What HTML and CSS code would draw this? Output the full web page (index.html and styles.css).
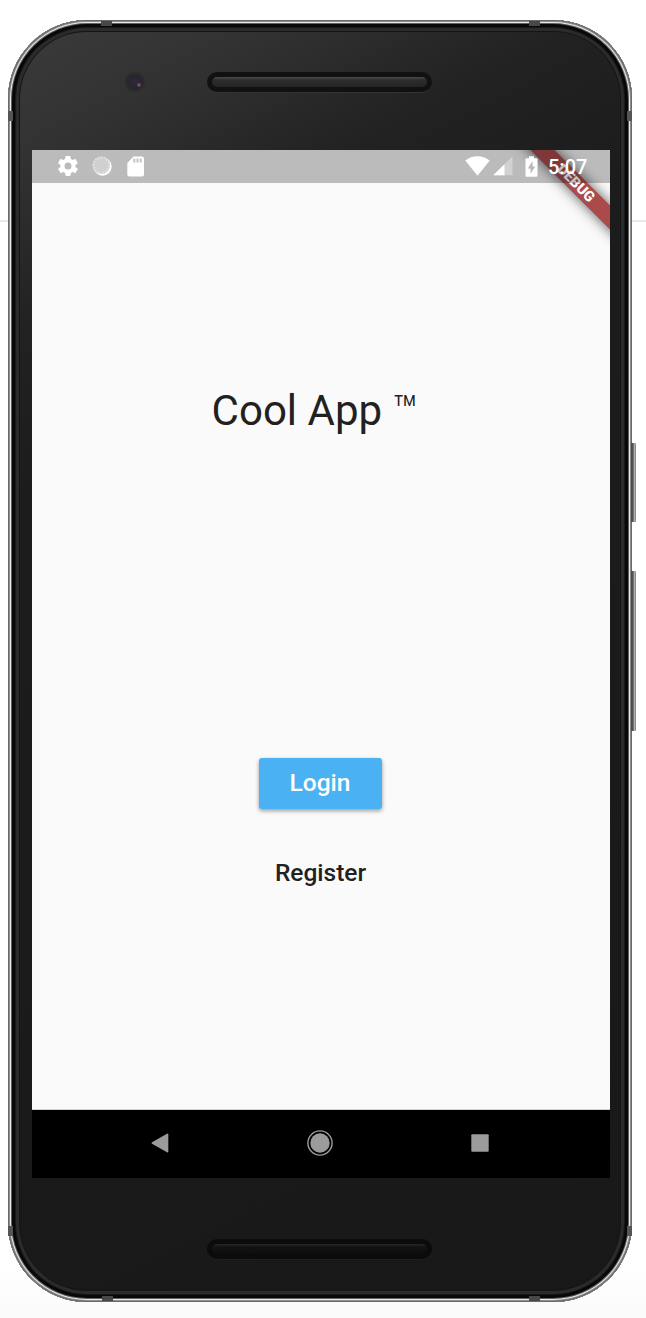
FILE: index.html
```html
<!DOCTYPE html>
<html lang="en">
<head>
<meta charset="utf-8">
<title>Cool App</title>
<link rel="stylesheet" href="styles.css">
</head>
<body>
<main class="page">
  <div class="device">
    <i class="side-key power"></i>
    <i class="side-key volume"></i>
    <i class="seam seam-tl"></i><i class="seam seam-tr"></i><i class="seam seam-bl"></i><i class="seam seam-br"></i>
    <i class="seam seam-lt"></i><i class="seam seam-rt"></i><i class="seam seam-lb"></i><i class="seam seam-rb"></i>
    <header class="forehead">
      <i class="camera"></i>
      <i class="speaker"></i>
    </header>
    <section class="screen">
      <div class="banner-clip"><div class="banner">DEBUG</div></div>
      <div class="status">
        <svg class="gear" width="24" height="24" viewBox="0 0 24 24"><path d="M19.4 13c0-.3.1-.6.1-1s0-.7-.1-1l2.1-1.6c.2-.2.2-.4.1-.6l-2-3.5c-.1-.2-.4-.3-.6-.2l-2.5 1c-.5-.4-1.1-.7-1.7-1l-.4-2.6c0-.3-.2-.5-.5-.5h-4c-.3 0-.5.2-.5.4L9 5.1c-.6.3-1.200.6-1.700 1l-2.500-1c-.2-.1-.5 0-.6.2l-2 3.500c-.1.2-.1.4.1.6L4.500 11c0 .3-.1.6-.1 1s0 .7.1 1l-2.100 1.600c-.2.2-.2.4-.1.6l2 3.500c.1.2.4.3.6.2l2.500-1c.5.4 1.100.7 1.700 1l.4 2.600c0 .2.2.5.5.5h4c.3 0 .5-.2.5-.5l.4-2.600c.6-.3 1.200-.6 1.700-1l2.500 1c.2.1.5 0 .6-.2l2-3.500c.1-.2.1-.5-.1-.6zM12 15.500a3.500 3.500 0 1 1 0-7 3.500 3.500 0 0 1 0 7z"/></svg>
        <svg class="sync" width="22" height="22" viewBox="0 0 22 22"><circle cx="11.500" cy="11.500" r="9.200"/><circle class="sync-face" cx="10.300" cy="10.300" r="8.800"/><circle class="sync-ticks" cx="10.300" cy="10.300" r="7.800"/></svg>
        <svg class="sd" width="17" height="21" viewBox="0 0 17 21"><path d="M6.500.5H15a2 2 0 0 1 2 2v16a2 2 0 0 1-2 2H2.300a2 2 0 0 1-2-2V7z"/><path class="pins" d="M6.300 2.500h2v4h-2zM9.500 2.500h2v4h-2zM12.700 2.500h2v4h-2z"/></svg>
        <span class="spacer"></span>
        <svg class="wifi" width="25" height="20" viewBox="0 0 25 20"><path d="M.3 4.500C3.800 1.600 8 .2 12.500.2s8.700 1.400 12.200 4.300L12.500 19.700z"/></svg>
        <svg class="cell" width="20" height="20" viewBox="0 0 20 20"><path class="faint" d="M19.500.3v19H.3z"/><path d="M11.500 8.200v11.100H.3z"/></svg>
        <svg class="battery" width="13" height="21" viewBox="0 0 13 21"><path fill-rule="evenodd" d="M4 .3h5v2h2.500q1 0 1 1v16.400q0 1-1 1h-10q-1 0-1-1V3.300q0-1 1-1H4zM7.500 5.200 2.800 12.500h2.700v5.300l4.700-7.300H7.500z"/></svg>
        <span class="clock">5:07</span>
      </div>
      <div class="app">
        <h1 class="title">Cool App <span class="mark">™</span></h1>
        <button class="login">Login</button>
        <a class="register">Register</a>
      </div>
      <nav class="nav">
        <svg width="18" height="20" viewBox="0 0 18 20"><path d="M16 .8Q17.300.1 17.300 1.600v16.800q0 1.500-1.300.8L1 10.800q-1-.8 0-1.600z"/></svg>
        <svg width="26" height="26" viewBox="0 0 26 26"><circle cx="13" cy="13" r="9.700"/><circle class="ring" cx="13" cy="13" r="12.100"/></svg>
        <svg width="18" height="18" viewBox="0 0 18 18"><rect x=".3" y=".3" width="17.400" height="17.400" rx="1"/></svg>
      </nav>
    </section>
    <footer class="chin"><i class="speaker dark"></i></footer>
  </div>
</main>
</body>
</html>
```
FILE: styles.css
```css
* { box-sizing: border-box; }
body { margin: 0; font-family: Roboto, sans-serif; }
.page {
  height: 1318px;
  padding: 20px 14px 0 8px;
  overflow: hidden;
  background:
    linear-gradient(#e9e9e9, #e9e9e9) 0 220px / 100% 2px no-repeat,
    linear-gradient(#fff 1265px, #fafafa 1318px);
}
.device {
  position: relative;
  width: 624px;
  height: 1282px;
  padding: 12px 22px 0 24px;
  border-radius: 79px;
  background: linear-gradient(152deg, #3b3b3b 0, #323232 9%, #222 19%, #1c1c1c 30%, #181818 100%);
  box-shadow:
    inset 0 0 0 1px #6a6a6a,
    inset 0 0 0 2px #8d8d8d,
    inset 0 0 0 3px #e8e8e8,
    inset 0 0 0 4px #606060,
    inset 0 0 0 7px #080808,
    inset 0 0 0 8px #191919,
    inset 0 0 0 11px #2b2b2b,
    inset 0 0 0 12px #151515;
}
.side-key {
  position: absolute;
  left: 623px;
  width: 5px;
  border-radius: 0 1px 1px 0;
  background: linear-gradient(90deg, #444, #5b5b5b 45%, #bbb 65%, #777);
}
.power { top: 423px; height: 79px; }
.volume { top: 551px; height: 160px; }
.seam { position: absolute; width: 11px; height: 5px; background: #484848; }
.seam-tl { left: 93px; top: 1px; }
.seam-tr { left: 521px; top: 1px; }
.seam-bl { left: 94px; bottom: 1px; }
.seam-br { left: 521px; bottom: 1px; }
.seam-lt, .seam-rt, .seam-lb, .seam-rb { width: 5px; height: 10px; background: #555; }
.seam-lt { left: 0; top: 91px; }
.seam-rt { right: 0; top: 91px; }
.seam-lb { left: 0; bottom: 66px; }
.seam-rb { right: 0; bottom: 66px; }
.forehead { display: flex; align-items: center; height: 118px; padding-left: 91px; }
.camera {
  width: 24px;
  height: 24px;
  margin-bottom: 18px;
  border-radius: 50%;
  background:
    radial-gradient(circle at 16px 15px, #a0606a 0, transparent 2.500px),
    radial-gradient(circle at 12px 12px, #302839 0, #292532 5px, #29282b 8px, transparent 11px);
}
.speaker {
  width: 225px;
  height: 20px;
  margin: 0 0 18px 60px;
  border: 5px solid #111;
  border-radius: 10px;
  background: linear-gradient(#4b4b4b, #2c2c2c 30%, #252525);
  box-shadow: 0 1px 0 #333;
}
.screen {
  position: relative;
  display: flex;
  flex-direction: column;
  width: 578px;
  height: 1028px;
  overflow: hidden;
  background: #fafafa;
}
.banner-clip { position: absolute; inset: 0 0 auto auto; width: 140px; height: 140px; overflow: hidden; }
.banner {
  position: absolute;
  left: 36px;
  top: 24.500px;
  width: 140px;
  height: 16.500px;
  transform: rotate(45deg);
  background: #aa4a4a;
  box-shadow: 0 0 13px rgba(0, 0, 0, .65);
  color: #fff;
  font-size: 14.500px;
  font-weight: 900;
  line-height: 17px;
  text-align: center;
}
.status {
  position: relative;
  display: flex;
  align-items: center;
  height: 33px;
  padding: 0 24px 1px 24px;
  background: rgba(0, 0, 0, .25);
  color: #fff;
}
.status svg { fill: #fff; }
.sync { margin-left: 11px; }
.sync .sync-face { fill: #d0d0d0; }
.sync .sync-ticks { fill: none; stroke: #e3e3e3; stroke-width: 2; stroke-dasharray: 1.500 1.500; }
.sd { margin-left: 14px; }
.status .pins { fill: #c4c4c4; }
.spacer { flex: 1; }
.wifi { margin-right: 3px; }
.cell { margin-right: 12px; }
.faint { opacity: .35; }
.battery { margin-right: 10px; }
.clock { width: 38px; padding-top: 2px; font-size: 20px; font-weight: 500; line-height: 30px; white-space: nowrap; }
.app {
  display: flex;
  flex-direction: column;
  align-items: center;
  height: 927px;
  padding-right: 1px;
  border-bottom: 1px solid #ccd3cc;
  color: #212121;
}
.title { margin: 203px 11px 0 0; font-size: 42px; font-weight: 400; line-height: 50px; }
.mark { font-weight: 300; }
.login {
  width: 123px;
  height: 51px;
  margin: 322px 0 0;
  padding: 0 1px 0 0;
  border: 0;
  border-radius: 3px;
  background: #4ab2f3;
  box-shadow: 0 2px 4px rgba(0, 0, 0, .38);
  color: #fff;
  font: 500 24.500px/49px Roboto, sans-serif;
}
.login::after { content: ""; display: block; height: 2px; }
.register { margin-top: 49px; font-size: 24.500px; font-weight: 500; line-height: 30px; }
.nav {
  display: grid;
  grid-template-columns: repeat(3, 160px);
  justify-content: center;
  align-items: center;
  justify-items: center;
  height: 68px;
  padding: 0 2px 2px 0;
  background: #000;
}
.nav svg { fill: #9b9b9b; }
.nav .ring { fill: none; stroke: #9b9b9b; stroke-width: 1.400; }
.chin { display: flex; padding: 61px 0 0 175px; }
.dark { margin: 0; border-color: #0b0b0b; background: linear-gradient(#282828, #121212 30%, #0e0e0e); box-shadow: 0 1px 0 #202020; }
```
